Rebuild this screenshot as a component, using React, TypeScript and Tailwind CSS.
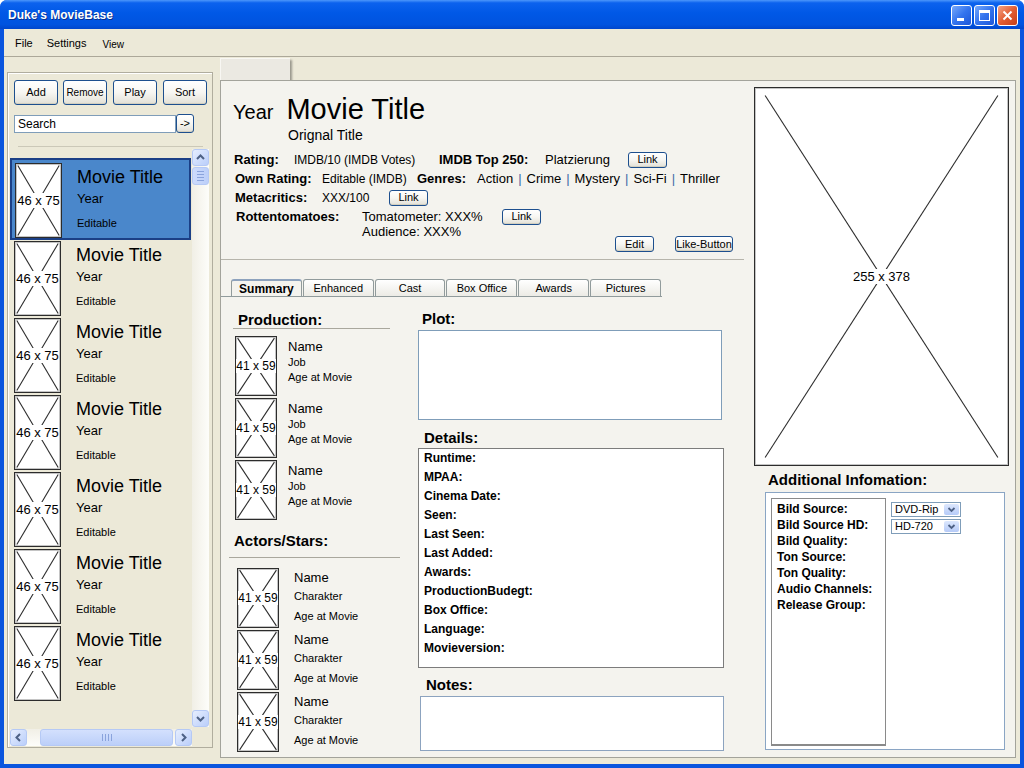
import React from "react";

type PhProps = { className: string; label: string; textClass: string };

function Placeholder({ className, label, textClass }: PhProps) {
  return (
    <div
      className={`relative flex shrink-0 items-center justify-center border border-[#2c2c2c] bg-white shadow-[inset_0_0_0_1px_#c4c4c4] ${className}`}
    >
      <svg
        className="absolute inset-0 h-full w-full"
        viewBox="0 0 100 100"
        preserveAspectRatio="none"
      >
        <line x1="4" y1="2" x2="96" y2="98" stroke="#2c2c2c" strokeWidth="1.1" vectorEffect="non-scaling-stroke" />
        <line x1="96" y1="2" x2="4" y2="98" stroke="#2c2c2c" strokeWidth="1.1" vectorEffect="non-scaling-stroke" />
      </svg>
      <span className={`relative bg-white py-[1px] leading-none text-black ${textClass}`}>{label}</span>
    </div>
  );
}

function XpButton({ className = "", children }: { className?: string; children: React.ReactNode }) {
  return (
    <button
      className={`flex shrink-0 items-center justify-center rounded-[3px] border border-[#1d4f8e] bg-linear-to-b from-white via-[#f7f6f2] to-[#e2e0d6] leading-none text-black shadow-[inset_0_-1px_0_#d2cfc0] ${className}`}
    >
      {children}
    </button>
  );
}

function ScrollBtn({ dir }: { dir: "up" | "down" | "left" | "right" }) {
  const pts = {
    up: "4,9 7.5,5.5 11,9",
    down: "4,6 7.5,9.5 11,6",
    left: "9,4 5.5,7.5 9,11",
    right: "6,4 9.5,7.5 6,11",
  }[dir];
  return (
    <div className="flex h-[17px] w-[17px] shrink-0 items-center justify-center rounded-[3px] border border-[#b5c9f5] bg-linear-to-br from-[#e6eefe] to-[#bacefa]">
      <svg width="15" height="15" viewBox="0 0 15 15">
        <polyline points={pts} fill="none" stroke="#4d6185" strokeWidth="2" />
      </svg>
    </div>
  );
}

function MovieText() {
  return (
    <div className="ml-[15px] flex flex-col text-black">
      <span className="mt-[5px] text-[18px] leading-none">Movie Title</span>
      <span className="mt-[6px] text-[13px] leading-none">Year</span>
      <span className="mt-[13px] text-[11px] leading-none">Editable</span>
    </div>
  );
}

function Crew({ sub }: { sub: string }) {
  return (
    <div className="ml-[6px] flex h-[62px]">
      <Placeholder className="h-[60px] w-[42px]" label="41 x 59" textClass="text-[12px]" />
      <div className="ml-[11px] flex flex-col">
        <span className="mt-[4px] text-[13px] leading-none">Name</span>
        <span className="mt-[4px] text-[11px] leading-none">{sub}</span>
        <span className="mt-[4px] text-[11px] leading-none">Age at Movie</span>
      </div>
    </div>
  );
}

function Actor() {
  return (
    <div className="ml-[8px] flex h-[62px]">
      <Placeholder className="h-[60px] w-[42px]" label="41 x 59" textClass="text-[12px]" />
      <div className="ml-[15px] flex flex-col">
        <span className="mt-[3px] text-[13px] leading-none">Name</span>
        <span className="mt-[7px] text-[11px] leading-none">Charakter</span>
        <span className="mt-[9px] text-[11px] leading-none">Age at Movie</span>
      </div>
    </div>
  );
}

const tabs = ["Summary", "Enhanced", "Cast", "Box Office", "Awards", "Pictures"];
const details = [
  "Runtime:",
  "MPAA:",
  "Cinema Date:",
  "Seen:",
  "Last Seen:",
  "Last Added:",
  "Awards:",
  "ProductionBudegt:",
  "Box Office:",
  "Language:",
  "Movieversion:",
];
const extra = [
  "Bild Source:",
  "Bild Source HD:",
  "Bild Quality:",
  "Ton Source:",
  "Ton Quality:",
  "Audio Channels:",
  "Release Group:",
];
const genres = ["Action", "Crime", "Mystery", "Sci-Fi", "Thriller"];

function Select({ value }: { value: string }) {
  return (
    <div className="flex h-[15px] w-[70px] items-center border border-[#7f9db9] bg-white pl-[3px] pr-[1px]">
      <span className="text-[11px] leading-none text-black">{value}</span>
      <div className="ml-auto flex h-[11px] w-[15px] items-center justify-center rounded-[2px] bg-linear-to-b from-[#dce7fd] to-[#b6cbf8]">
        <svg width="9" height="6" viewBox="0 0 9 6">
          <polyline points="1.5,1 4.5,4 7.5,1" fill="none" stroke="#4d6185" strokeWidth="1.8" />
        </svg>
      </div>
    </div>
  );
}

export default function App() {
  return (
    <div className="flex h-[768px] w-[1024px] flex-col overflow-hidden rounded-t-[7px] bg-[#0a55de] font-['Liberation_Sans',Arial,sans-serif] text-black">
      {/* title bar */}
      <div className="flex h-[29px] shrink-0 items-center bg-[linear-gradient(to_bottom,#4d97fb_0%,#0c62ee_10%,#0058e6_45%,#0053df_85%,#0046cc_100%)] pl-[8px] pr-[6px]">
        <span className="text-[12px] font-bold text-white [text-shadow:1px_1px_0_#0b2f8c]">Duke's MovieBase</span>
        <div className="ml-auto mt-[1px] flex items-center gap-[2px]">
          <div className="flex h-[21px] w-[21px] items-end rounded-[3px] border border-white bg-linear-to-br from-[#77a8fa] via-[#3474ee] to-[#1d56d8] pb-[4px] pl-[5px]">
            <span className="h-[3px] w-[7px] bg-white" />
          </div>
          <div className="flex h-[21px] w-[21px] items-center justify-center rounded-[3px] border border-white bg-linear-to-br from-[#77a8fa] via-[#3474ee] to-[#1d56d8]">
            <span className="h-[11px] w-[11px] border border-t-[3px] border-white" />
          </div>
          <div className="flex h-[21px] w-[21px] items-center justify-center rounded-[3px] border border-white bg-linear-to-br from-[#f3a384] via-[#e25d32] to-[#c63f17]">
            <svg width="11" height="11" viewBox="0 0 11 11">
              <line x1="1.5" y1="1.5" x2="9.5" y2="9.5" stroke="white" strokeWidth="2" />
              <line x1="9.5" y1="1.5" x2="1.5" y2="9.5" stroke="white" strokeWidth="2" />
            </svg>
          </div>
        </div>
      </div>

      <div className="mx-[4px] mb-[4px] flex flex-1 flex-col bg-[#ece9d8]">
        {/* menu */}
        <div className="flex h-[28px] shrink-0 items-center border-b border-[#aca899] pl-[11px] pt-[1px] text-[11px]">
          <span>File</span>
          <span className="ml-[14px]">Settings</span>
          <span className="ml-[16px] mt-[2px] text-[10px]">View</span>
        </div>

        <div className="flex flex-1">
          {/* left panel */}
          <div className="ml-[3px] mt-[15px] flex h-[676px] w-[206px] flex-col border border-[#b0ad9e] shadow-[inset_1px_1px_0_#fff]">
            <div className="ml-[6px] mt-[7px] flex">
              <XpButton className="h-[25px] w-[44px] text-[11px]">Add</XpButton>
              <XpButton className="ml-[5px] h-[25px] w-[44px] text-[10px]">Remove</XpButton>
              <XpButton className="ml-[6px] h-[25px] w-[44px] text-[11px]">Play</XpButton>
              <XpButton className="ml-[6px] h-[25px] w-[44px] text-[11px]">Sort</XpButton>
            </div>
            <div className="ml-[6px] mt-[9px] flex items-center">
              <div className="flex h-[18px] w-[162px] items-center border border-[#7f9db9] bg-white pl-[3px] text-[12px]">
                Search
              </div>
              <XpButton className="h-[19px] w-[18px] text-[11px]">-&gt;</XpButton>
            </div>
            <div className="ml-[10px] mt-[13px] h-px w-[185px] bg-[#cbc8b8]" />

            <div className="ml-[2px] mt-[2px] w-[199px]">
              <div className="flex h-[578px]">
                <div className="w-[182px] overflow-hidden pt-[9px]">
                  <div className="flex h-[82px] w-[181px] border-2 border-[#1b3f86] bg-[#4a87cb] pl-[3px] pt-[3px]">
                    <Placeholder className="h-[75px] w-[47px]" label="46 x 75" textClass="text-[13px]" />
                    <MovieText />
                  </div>
                  <div className="mt-[1px]">
                    {[0, 1, 2, 3, 4, 5].map((i) => (
                      <div key={i} className="flex h-[77px] pl-[4px]">
                        <Placeholder className="h-[75px] w-[47px]" label="46 x 75" textClass="text-[13px]" />
                        <MovieText />
                      </div>
                    ))}
                  </div>
                </div>
                <div className="flex w-[17px] flex-col bg-linear-to-r from-[#f1efe6] to-[#fdfdfa]">
                  <ScrollBtn dir="up" />
                  <div className="mt-[1px] flex h-[18px] w-[17px] flex-col items-center justify-center gap-[2px] rounded-[3px] border border-[#b5c9f5] bg-linear-to-r from-[#cddbfc] to-[#bccff9]">
                    <span className="h-px w-[7px] bg-[#8aa3dc]" />
                    <span className="h-px w-[7px] bg-[#8aa3dc]" />
                    <span className="h-px w-[7px] bg-[#8aa3dc]" />
                    <span className="h-px w-[7px] bg-[#8aa3dc]" />
                  </div>
                  <div className="flex-1" />
                  <ScrollBtn dir="down" />
                </div>
              </div>
              <div className="mt-[2px] flex h-[17px] w-[182px] bg-linear-to-b from-[#f1efe6] to-[#fdfdfa]">
                <ScrollBtn dir="left" />
                <div className="flex flex-1 pl-[13px] pr-[2px]">
                  <div className="flex h-[17px] flex-1 items-center justify-center gap-[2px] rounded-[3px] border border-[#b5c9f5] bg-linear-to-b from-[#d3e0fd] to-[#bccff9]">
                    <span className="h-[7px] w-px bg-[#8aa3dc]" />
                    <span className="h-[7px] w-px bg-[#8aa3dc]" />
                    <span className="h-[7px] w-px bg-[#8aa3dc]" />
                    <span className="h-[7px] w-px bg-[#8aa3dc]" />
                  </div>
                </div>
                <ScrollBtn dir="right" />
              </div>
            </div>
          </div>

          {/* main area */}
          <div className="ml-[7px] mt-[1px] flex flex-col">
            <div className="h-[22px] w-[70px] border-l border-t border-[#f8f7f3] bg-[#ebe9e2] shadow-[2px_2px_2px_rgba(0,0,0,0.35)]" />
            <div className="flex h-[678px] w-[796px] border border-[#a3a39b] bg-[#f4f3ee]">
              {/* left column */}
              <div className="flex w-[524px] flex-col">
                <div className="h-[179px] w-[523px] border-b border-[#b6b4ab] pt-[14px]">
                  <div className="flex items-baseline pl-[12px]">
                    <span className="text-[20px] leading-none">Year</span>
                    <span className="ml-[13px] text-[29px] leading-none">Movie Title</span>
                  </div>
                  <div className="ml-[67px] mt-[4px] text-[14px] leading-none">Orignal Title</div>

                  <div className="mt-[8px] flex h-[19px] items-center pl-[13px] text-[12px]">
                    <span className="w-[60px] text-[13px] font-bold">Rating:</span>
                    <span className="w-[145px]">IMDB/10 (IMDB Votes)</span>
                    <span className="w-[106px] text-[13px] font-bold">IMDB Top 250:</span>
                    <span className="w-[83px] text-[13px]">Platzierung</span>
                    <XpButton className="h-[16px] w-[39px] text-[11px]">Link</XpButton>
                  </div>
                  <div className="flex h-[19px] items-center pl-[14px] text-[12px]">
                    <span className="w-[87px] text-[13px] font-bold">Own Rating:</span>
                    <span className="w-[95px]">Editable (IMDB)</span>
                    <span className="w-[60px] text-[13px] font-bold">Genres:</span>
                    <span className="flex text-[13px]">
                      {genres.map((g, i) => (
                        <React.Fragment key={g}>
                          {i > 0 && <span className="mx-[5px] text-[#3f6aa6]">|</span>}
                          <span>{g}</span>
                        </React.Fragment>
                      ))}
                    </span>
                  </div>
                  <div className="flex h-[19px] items-center pl-[14px] text-[12px]">
                    <span className="w-[87px] text-[13px] font-bold">Metacritics:</span>
                    <span className="w-[67px]">XXX/100</span>
                    <XpButton className="h-[16px] w-[39px] text-[11px]">Link</XpButton>
                  </div>
                  <div className="flex items-start pl-[15px] text-[13px]">
                    <span className="flex h-[19px] w-[126px] items-center font-bold">Rottentomatoes:</span>
                    <div className="flex flex-col pb-[14px]">
                      <div className="flex h-[19px] items-center">
                        <span className="w-[140px]">Tomatometer: XXX%</span>
                        <XpButton className="h-[16px] w-[39px] text-[11px]">Link</XpButton>
                      </div>
                      <span className="-mt-[1px] leading-none">Audience: XXX%</span>
                    </div>
                    <div className="ml-auto mr-[11px] flex self-end">
                      <XpButton className="h-[16px] w-[39px] text-[11px]">Edit</XpButton>
                      <XpButton className="ml-[21px] h-[16px] w-[58px] text-[11px]">Like-Button</XpButton>
                    </div>
                  </div>
                </div>

                {/* tabs */}
                <div className="mt-[19px] flex h-[18px] w-[441px] border-b border-[#919b9c] pl-[10px]">
                  {tabs.map((t, i) => (
                    <div
                      key={t}
                      className={`mr-[1px] flex h-[17px] w-[71px] items-center justify-center rounded-t-[3px] border border-b-0 border-[#919b9c] text-[11px] leading-none ${
                        i === 0
                          ? "border-t-2 border-t-[#8da2bd] bg-[#f4f3ee] font-bold text-[12px]"
                          : "bg-linear-to-b from-white to-[#ecebe5]"
                      }`}
                    >
                      {t}
                    </div>
                  ))}
                </div>

                {/* tab content */}
                <div className="flex">
                  <div className="ml-[8px] flex w-[171px] flex-col">
                    <div className="ml-[4px] mt-[15px] w-[157px] border-b border-[#a9a79d] pb-[1px] pl-[5px] text-[15px] font-bold leading-none">
                      Production:
                    </div>
                    <div className="mt-[7px]">
                      <Crew sub="Job" />
                      <Crew sub="Job" />
                      <Crew sub="Job" />
                    </div>
                    <div className="mt-[11px] w-[171px] border-b border-[#a9a79d] pb-[9px] pl-[5px] text-[15px] font-bold leading-none">
                      Actors/Stars:
                    </div>
                    <div className="mt-[10px]">
                      <Actor />
                      <Actor />
                      <Actor />
                    </div>
                  </div>

                  <div className="ml-[18px] flex w-[306px] flex-col">
                    <div className="mt-[14px] pl-[4px] text-[15px] font-bold leading-none">Plot:</div>
                    <div className="mt-[4px] h-[90px] w-[304px] border border-[#7f9db9] bg-white" />
                    <div className="mt-[10px] pl-[6px] text-[15px] font-bold leading-none">Details:</div>
                    <div className="mt-[3px] flex h-[220px] w-[306px] flex-col border border-[#7c7c7c] bg-white pl-[5px]">
                      {details.map((d) => (
                        <span key={d} className="text-[12px] font-bold leading-[19px]">
                          {d}
                        </span>
                      ))}
                    </div>
                    <div className="mt-[9px] pl-[8px] text-[15px] font-bold leading-none">Notes:</div>
                    <div className="ml-[2px] mt-[4px] h-[55px] w-[304px] border border-[#8ca3bf] bg-white" />
                  </div>
                </div>
              </div>

              {/* right column */}
              <div className="flex flex-col">
                <Placeholder className="ml-[9px] mt-[6px] h-[379px] w-[255px]" label="255 x 378" textClass="text-[13px]" />
                <div className="ml-[23px] mt-[6px] text-[15px] font-bold leading-none">Additional Infomation:</div>
                <div className="ml-[20px] mt-[5px] flex h-[258px] w-[240px] border border-[#8aa5c4] bg-white pl-[5px] pt-[5px]">
                  <div className="flex h-[248px] w-[115px] flex-col border border-b-2 border-[#8a8a8a] pl-[5px] pt-[2px]">
                    {extra.map((e) => (
                      <span key={e} className="text-[12px] font-bold leading-[16px]">
                        {e}
                      </span>
                    ))}
                  </div>
                  <div className="ml-[5px] mt-[4px] flex flex-col gap-[2px]">
                    <Select value="DVD-Rip" />
                    <Select value="HD-720" />
                  </div>
                </div>
              </div>
            </div>
          </div>
        </div>
      </div>
    </div>
  );
}
